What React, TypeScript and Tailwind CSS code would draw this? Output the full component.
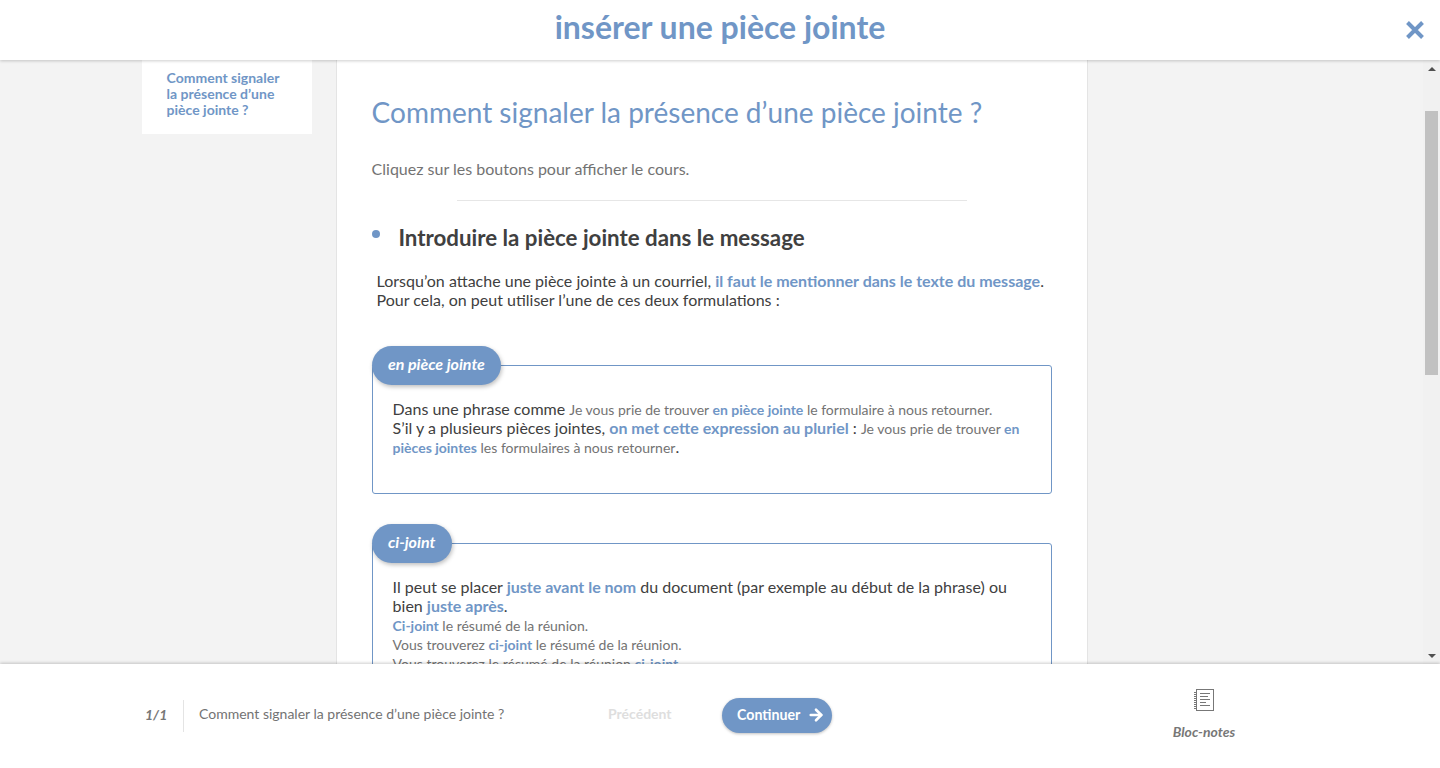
import type { ReactNode } from "react";
import { ArrowRight } from "lucide-react";

function Pill({ label }: { label: string }) {
  return (
    <div className="absolute -top-[20px] -left-px h-[39px] pl-[16px] pr-[16.5px] pb-[4px] flex items-center rounded-[20px] bg-[#7096c6] text-white text-[16px] font-bold italic shadow-[1px_2px_4px_rgba(0,0,0,0.25)]">
      {label}
    </div>
  );
}

function Strong({ children }: { children: ReactNode }) {
  return <span className="font-bold leading-[16px] text-[#7096c6]">{children}</span>;
}

function Small({ children }: { children: ReactNode }) {
  return <span className="text-[14px] leading-[16px] text-[#737373]">{children}</span>;
}

function NotebookIcon() {
  return (
    <svg width="20" height="23" viewBox="0 0 20 23" fill="none" stroke="#777777">
      <rect x="2.5" y="0.5" width="17" height="21" strokeWidth="1" />
      <path d="M0 3.5h3M0 5.5h3M0 7.5h3M0 9.5h3M0 11.5h3M0 13.5h3M0 15.5h3M0 17.5h3M0 19.5h3" strokeWidth="1" />
      <path d="M6 4.5h10M6 7.5h8M6 10.5h10M6 13.5h6M6 16.5h10" strokeWidth="1" />
    </svg>
  );
}

export default function App() {
  return (
    <div className="h-screen flex flex-col overflow-hidden bg-white font-['Lato','Carlito','Open_Sans',sans-serif] text-[#404040]">
      {/* Top bar */}
      <header className="relative z-10 h-[60px] shrink-0 flex items-center justify-center bg-white shadow-[0_1px_3px_rgba(0,0,0,0.2)]">
        <h1 className="mb-[6px] text-[32px] font-bold text-[#7096c6]">insérer une pièce jointe</h1>
        <svg className="absolute right-[15px] top-[20px]" width="20" height="20" viewBox="0 0 20 20" fill="none" stroke="#7096c6" strokeWidth="4">
          <path d="M2.5 2.5l15 15M17.5 2.5l-15 15" />
        </svg>
      </header>

      {/* Scroll area */}
      <div className="flex-1 min-h-0 flex bg-[#f3f3f3]">
        <main className="flex-1 min-w-0 overflow-hidden flex items-start">
          <nav className="ml-[142px] w-[170px] shrink-0 bg-white pl-[24.6px] pr-[20px] pt-[10px] pb-[16px] text-[14px] leading-[16px] font-bold text-[#7096c6]">
            Comment signaler
            <br />
            la présence d’une
            <br />
            pièce jointe ?
          </nav>

          <article className="ml-[24px] w-[752px] shrink-0 bg-white border-x border-[#e4e4e4] pl-[34.6px] pr-[35px] pt-[35px] pb-[40px]">
            <h2 className="text-[28px] leading-[34px] text-[#7096c6]">Comment signaler la présence d’une pièce jointe ?</h2>
            <p className="mt-[30px] text-[16px] leading-[19px] text-[#737373]">Cliquez sur les boutons pour afficher le cours.</p>
            <hr className="mt-[22px] mx-[85px] border-[#e6e6e6]" />

            <div className="mt-[22px] flex items-start">
              <span className="mt-[7px] w-[8px] h-[8px] rounded-full bg-[#7096c6] shrink-0" />
              <h3 className="ml-[18.8px] text-[22.3px] leading-[30px] font-bold text-[#404040]">Introduire la pièce jointe dans le message</h3>
            </div>

            <p className="mt-[18px] ml-[5px] text-[16px] leading-[19px]">
              Lorsqu’on attache une pièce jointe à un courriel, <Strong>il faut le mentionner dans le texte du message</Strong>.
              <br />
              Pour cela, on peut utiliser l’une de ces deux formulations :
            </p>

            <section className="relative mt-[56px] ml-[0.4px] w-[680px] h-[129px] border border-[#7096c6] rounded-[3px] pl-[19.6px] pr-[20px] pt-[33px] text-[16px] leading-[19px]">
              <Pill label="en pièce jointe" />
              <p>
                Dans une phrase comme <Small>Je vous prie de trouver <Strong>en pièce jointe</Strong> le formulaire à nous retourner.</Small>
                <br />
                S’il y a plusieurs pièces jointes, <Strong>on met cette expression au pluriel</Strong> : <Small>Je vous prie de trouver <Strong>en pièces jointes</Strong> les formulaires à nous retourner</Small>.
              </p>
            </section>

            <section className="relative mt-[49px] ml-[0.4px] w-[680px] h-[200px] border border-[#7096c6] rounded-[3px] pl-[19.6px] pr-[20px] pt-[33px] text-[16px] leading-[19px]">
              <Pill label="ci-joint" />
              <p>
                Il peut se placer <Strong>juste avant le nom</Strong> du document (par exemple au début de la phrase) ou bien <Strong>juste après</Strong>.
              </p>
              <p className="mt-[1px] text-[14px] text-[#737373]">
                <Strong>Ci-joint</Strong> le résumé de la réunion.
                <br />
                Vous trouverez <Strong>ci-joint</Strong> le résumé de la réunion.
                <br />
                Vous trouverez le résumé de la réunion <Strong>ci-joint</Strong>.
              </p>
            </section>
          </article>
        </main>

        {/* Scrollbar */}
        <div className="w-[17px] shrink-0 bg-[#f1f1f1] flex flex-col items-center">
          <div className="h-[17px] w-full flex items-center justify-center">
            <div className="w-0 h-0 border-x-[4px] border-x-transparent border-b-[4px] border-b-[#505050]" />
          </div>
          <div className="mt-[34px] w-[13px] h-[264px] bg-[#c1c1c1]" />
          <div className="mt-auto h-[17px] w-full flex items-center justify-center">
            <div className="w-0 h-0 border-x-[4px] border-x-transparent border-t-[4px] border-t-[#505050]" />
          </div>
        </div>
      </div>

      {/* Bottom bar */}
      <footer className="relative z-10 h-[104px] shrink-0 flex items-center bg-white shadow-[0_-1px_3px_rgba(0,0,0,0.2)]">
        <div className="ml-[145px] w-[39px] h-[32px] pb-[4px] flex items-center border-r border-[#e4e4e4] text-[14px] font-bold italic text-[#777777]">1/1</div>
        <div className="ml-[15px] w-[409px] mb-[5px] text-[14px] text-[#737373]">Comment signaler la présence d’une pièce jointe ?</div>
        <div className="w-[114px] mb-[5px] text-[14px] font-bold text-[#dedede]">Précédent</div>
        <button className="w-[110px] h-[35px] mb-[2px] pl-[15px] flex items-center justify-start gap-[7px] rounded-[18px] bg-[#7096c6] text-white text-[14.2px] font-bold shadow-[0_1px_3px_rgba(0,0,0,0.25)]">
          Continuer
          <ArrowRight size={18} strokeWidth={3.5} />
        </button>
        <div className="ml-[316px] w-[112px] flex flex-col items-center -mt-[4px]">
          <NotebookIcon />
          <span className="mt-[12px] text-[14px] leading-[16px] font-bold italic text-[#777777]">Bloc-notes</span>
        </div>
      </footer>
    </div>
  );
}
